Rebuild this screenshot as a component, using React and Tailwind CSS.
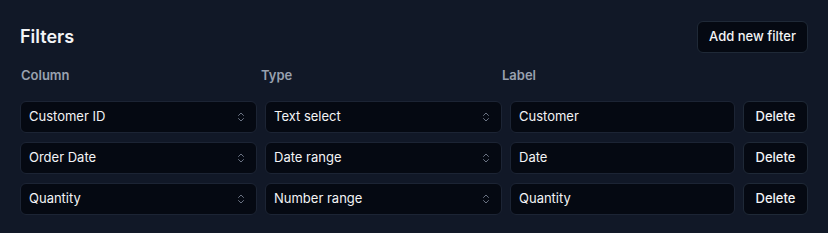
import React from "react";
import { ChevronsUpDown } from "lucide-react";

const filters = [
  { column: "Customer ID", type: "Text select", label: "Customer" },
  { column: "Order Date", type: "Date range", label: "Date" },
  { column: "Quantity", type: "Number range", label: "Quantity" },
];

function SelectBox({ value }) {
  return (
    <div className="flex h-8 items-center justify-between rounded-md border border-[#1c2434] bg-[#050912] pl-2 pr-[9px] text-[13px] text-gray-100">
      <span>{value}</span>
      <ChevronsUpDown className="h-3 w-3 text-gray-500" strokeWidth={2} />
    </div>
  );
}

export default function App() {
  return (
    <div
      className="min-h-[233px] bg-[#111827] px-5 pt-[21px]"
      style={{ fontFamily: "Inter, 'Noto Sans', sans-serif" }}
    >
      <div className="flex h-8 items-center justify-between">
        <h2 className="text-lg font-semibold text-gray-100">Filters</h2>
        <button className="h-8 w-[111px] rounded-md border border-[#1f2937] bg-[#050912] text-[13px] font-medium text-gray-100">
          Add new filter
        </button>
      </div>

      {/* column headers */}
      <div className="mt-3 grid grid-cols-[241px_241px_1fr] text-[13px] font-semibold leading-5 text-gray-400">
        <div className="pl-px">Column</div>
        <div>Type</div>
        <div>Label</div>
      </div>

      <div className="mt-4 flex flex-col gap-[9px]">
        {filters.map(f => (
          <div key={f.label} className="grid grid-cols-[237px_237px_225px_65px] gap-2">
            <SelectBox value={f.column} />
            <SelectBox value={f.type} />
            <div className="flex h-8 items-center rounded-md border border-[#1c2434] bg-[#050912] px-2 text-[13px] text-gray-100">
              {f.label}
            </div>
            <button className="h-8 rounded-md border border-[#1f2937] bg-[#050912] text-[13px] font-medium text-gray-100">
              Delete
            </button>
          </div>
        ))}
      </div>
    </div>
  );
}
